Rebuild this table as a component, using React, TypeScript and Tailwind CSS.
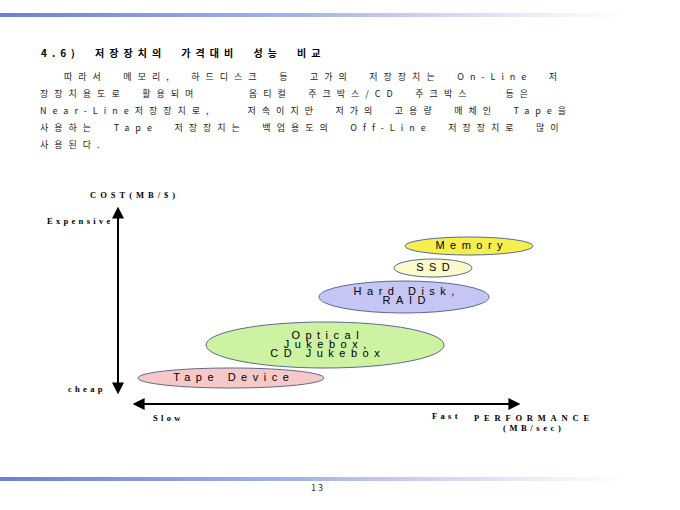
import React from "react";

const lines = [
  { text: "따라서 메모리, 하드디스크 등 고가의 저장장치는 On-Line 저", indent: true },
  { text: "장장치용도로 활용되며   옵티컬 주크박스/CD 주크박스  등은", indent: false },
  { text: "Near-Line저장장치로,  저속이지만 저가의 고용량 매체인 Tape을", indent: false },
  { text: "사용하는 Tape 저장장치는 백업용도의 Off-Line 저장장치로 많이", indent: false },
  { text: "사용된다.", indent: false },
];

const blobs = [
  { cx: 469, cy: 86, rx: 64, ry: 9, fill: "#f4ef4c", label: ["Memory"] },
  { cx: 433, cy: 108, rx: 39, ry: 9, fill: "#fafacb", label: ["SSD"] },
  { cx: 404, cy: 137, rx: 85, ry: 16, fill: "#c6c6f4", label: ["Hard Disk,", "RAID"] },
  { cx: 325, cy: 185, rx: 119, ry: 23, fill: "#cdf2a2", label: ["Optical", "Jukebox,", "CD Jukebox"] },
  { cx: 231, cy: 218, rx: 93, ry: 10, fill: "#f7c8c8", label: ["Tape Device"] },
];

const axis = "absolute text-[8.5px] leading-[10px] font-bold font-['Liberation_Serif','DejaVu_Serif',serif]";

function Chart() {
  return (
    <div className="relative mt-[7px] h-[317px] w-full shrink-0">
      <svg className="absolute inset-0" width="680" height="317" viewBox="0 0 680 317">
        <defs>
          <marker id="ah" viewBox="0 0 10 10" refX="8" refY="5" markerWidth="6" markerHeight="6" orient="auto-start-reverse">
            <path d="M0 0 L10 5 L0 10 z" fill="#000" />
          </marker>
        </defs>
        <line x1="118" y1="49" x2="118" y2="232" stroke="#000" strokeWidth="2" markerStart="url(#ah)" markerEnd="url(#ah)" />
        <line x1="135" y1="244" x2="518" y2="244" stroke="#000" strokeWidth="2" markerStart="url(#ah)" markerEnd="url(#ah)" />
        {blobs.map((b) => (
          <ellipse key={b.label[0]} cx={b.cx} cy={b.cy} rx={b.rx} ry={b.ry} fill={b.fill} stroke="#5b6994" strokeWidth="1" />
        ))}
      </svg>

      {blobs.map((b) => (
        <div
          key={b.label[0] + "t"}
          className="absolute flex flex-col items-center justify-center text-[11px] leading-[9px] tracking-[5.5px] pl-[5.5px] text-black font-['Liberation_Sans',Arial,sans-serif]"
          style={{ left: b.cx - b.rx, top: b.cy - b.ry - 1, width: b.rx * 2, height: b.ry * 2 }}
        >
          {b.label.map((l) => (
            <span key={l} className="whitespace-pre">{l}</span>
          ))}
        </div>
      ))}

      <div className={`${axis} left-[90px] top-[30px] tracking-[4px]`}>COST(MB/$)</div>
      <div className={`${axis} left-[47px] top-[56px] tracking-[3.3px]`}>Expensive</div>
      <div className={`${axis} left-[68px] top-[224px] tracking-[3.3px]`}>cheap</div>
      <div className={`${axis} left-[153px] top-[253px] tracking-[3.3px]`}>Slow</div>
      <div className={`${axis} left-[432px] top-[251px] tracking-[3.3px]`}>Fast</div>
      <div className={`${axis} left-[474px] top-[253px] tracking-[4.8px]`}>PERFORMANCE</div>
      <div className={`${axis} left-[503px] top-[263px] tracking-[3.6px]`}>(MB/sec)</div>
    </div>
  );
}

export default function App() {
  return (
    <div className="w-[680px] h-[510px] bg-white flex flex-col overflow-hidden text-black">
      <div className="mt-[13px] h-[4px] w-full shrink-0 bg-[linear-gradient(to_right,#6f7fd6,#a9b3ea_45%,#e4e7f8_75%,#ffffff_92%)]" />

      <div className="mt-[27px] pl-[41px] text-[10px] leading-[17px] font-bold tracking-[5px] [word-spacing:8px] whitespace-nowrap font-['Noto_Sans_CJK_KR','Noto_Sans',sans-serif]">
        4.6) 저장장치의 가격대비 성능 비교
      </div>

      <div className="mt-[7px] pl-[40px] flex flex-col text-[9px] leading-[17px] tracking-[6px] [word-spacing:8.5px] text-[#222] font-['Noto_Sans_CJK_KR','Noto_Sans',sans-serif]">
        {lines.map((l) => (
          <div key={l.text} className={`whitespace-pre ${l.indent ? "pl-[24px]" : ""}`}>
            {l.text}
          </div>
        ))}
      </div>

      <Chart />

      <div className="h-[4px] w-full shrink-0 bg-[linear-gradient(to_right,#6f7fd6,#a9b3ea_45%,#e4e7f8_75%,#ffffff_92%)]" />
      <div className="mt-[1px] pl-[311px] text-[9px] leading-[12px] tracking-[2px] text-[#333] font-['Noto_Sans_CJK_KR','Noto_Sans',sans-serif]">
        13
      </div>
    </div>
  );
}
